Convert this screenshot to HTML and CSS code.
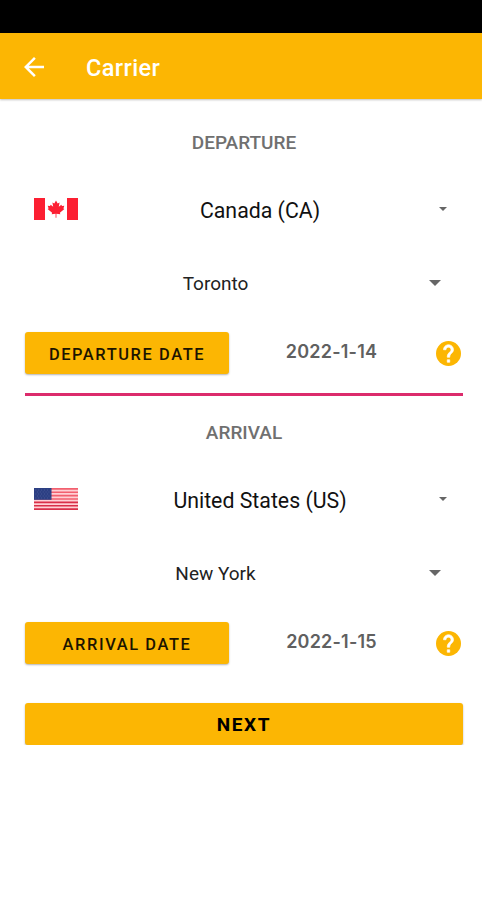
FILE: index.html
```html
<!DOCTYPE html>
<html lang="en">
<head>
<meta charset="utf-8">
<title>Carrier</title>
<link rel="stylesheet" href="styles.css">
</head>
<body>
<svg class="defs" width="0" height="0" aria-hidden="true">
  <symbol id="help" viewBox="2 2 20 20"><circle cx="12" cy="12" r="10"/><path fill="#fff" stroke="#fff" stroke-width=".5" d="M13 19h-2v-2h2v2zm2.070-7.750l-.9.920C13.450 12.900 13 13.500 13 15h-2v-.5c0-1.100.450-2.100 1.170-2.830l1.240-1.260c.370-.360.590-.860.590-1.410 0-1.100-.9-2-2-2s-2 .9-2 2H8c0-2.210 1.790-4 4-4s4 1.790 4 4c0 .880-.360 1.680-.930 2.250z"/></symbol>
</svg>
<div class="status"></div>
<header class="bar">
  <svg class="back" viewBox="4 4 16 16"><path d="M20 11H7.830l5.590-5.590L12 4l-8 8 8 8 1.410-1.410L7.830 13H20v-2z"/></svg>
  <h1>Carrier</h1>
</header>
<main>
  <section class="leg">
    <h2>DEPARTURE</h2>
    <div class="country">
      <svg class="flag" viewBox="0 0 44 22"><path fill="#fff" d="M0 0h44v22H0z"/><path fill="#fc1f32" d="M0 0h11v22H0zM33 0h11v22H33z"/><path fill="#fc1f32" d="M22 2.500l1.700 3 1.900-.9-.8 4.200 2.500-2 .7 1.300 2.300-.3-.9 2.600 1 .7-4.500 3.700.4 1.500-3.900-.5v4h-.8v-4l-3.900.5.400-1.500-4.500-3.700 1-.7-.9-2.600 2.300.3.700-1.300 2.500 2-.8-4.200 1.900.9z"/></svg>
      <span class="name">Canada (CA)</span><i class="caret small"></i>
    </div>
    <div class="city"><span>Toronto</span><i class="caret"></i></div>
    <div class="date">
      <button>DEPARTURE DATE</button><span>2022-1-14</span>
      <svg class="help"><use href="#help"/></svg>
    </div>
  </section>
  <hr>
  <section class="leg">
    <h2>ARRIVAL</h2>
    <div class="country">
      <svg class="flag" viewBox="0 0 44 22"><path fill="#ffd0d4" d="M0 0h44v22H0z"/><path stroke="#f2606f" stroke-width="1.700" d="M0 .85h44M0 4.230h44M0 7.610h44M0 11h44"/><path stroke="#d92f48" stroke-width="1.700" d="M0 14.380h44M0 17.760h44M0 21.150h44"/><path fill="#2c3f83" d="M0 0h17.500v11.800H0z"/><path stroke="#6474aa" stroke-width=".7" stroke-dasharray=".7 2.200" d="M1.500 2h15M3 4h13M1.500 6h15M3 8h13M1.500 10h15"/></svg>
      <span class="name">United States (US)</span><i class="caret small"></i>
    </div>
    <div class="city"><span>New York</span><i class="caret"></i></div>
    <div class="date">
      <button>ARRIVAL DATE</button><span>2022-1-15</span>
      <svg class="help"><use href="#help"/></svg>
    </div>
  </section>
  <button class="next">NEXT</button>
</main>
</body>
</html>
```
FILE: styles.css
```css
* { box-sizing: border-box; }
body { margin: 0; background: #fff; font-family: Roboto, sans-serif; color: #111; }
.defs { display: block; }
.status { height: 33px; background: #000; }
.bar {
  display: flex; align-items: center; gap: 42px; height: 66px; padding: 1px 24px 0;
  background: #fcb603; color: #fff; box-shadow: 0 1px 2px rgba(0,0,0,.25);
}
.back { width: 20px; height: 20px; fill: #fff; }
h1 { margin: 0; padding-top: 2px; font-size: 23.500px; letter-spacing: .4px; font-weight: 500; line-height: 30px; }
main { padding: 0 19px 0 25px; }
h2 {
  margin: 0; padding-top: 24px; font-size: 19px; font-weight: 500; line-height: 40px;
  text-align: center; color: #707070;
}
.country {
  display: grid; grid-template-columns: 44px 1fr 8px; align-items: center;
  height: 60px; margin-top: 16px; padding: 0 16px 0 9px;
}
.flag { width: 44px; height: 22px; }
.name { padding: 2px 0 0 3px; font-size: 21.300px; text-align: center; }
.city {
  display: grid; grid-template-columns: 381px 12px; align-items: center;
  height: 40px; margin-top: 24px; font-size: 19px; text-align: center; color: #222;
}
.caret { width: 12px; height: 6px; background: #666; clip-path: polygon(0 0, 100% 0, 50% 100%); }
.caret.small { width: 8px; height: 4px; }
.city .caret { margin-left: 23px; }
.date {
  display: grid; grid-template-columns: 204px 1fr 25px; align-items: center;
  height: 42px; margin-top: 29px; padding-right: 2px;
}
.date > span {
  padding: 0 2px 4px 0; text-align: center; font-family: Inter, sans-serif;
  font-size: 18px; font-weight: 600; letter-spacing: .2px; color: #606060;
}
button {
  height: 42px; padding: 2px 0 0; border: 0; border-radius: 3px; background: #fcb603; color: #1b1400;
  font: 500 16.400px Roboto, sans-serif; letter-spacing: 1.600px; box-shadow: 0 1px 2px rgba(0,0,0,.3);
}
.help { width: 25px; height: 25px; fill: #fcb603; }
hr { width: 438px; height: 2.500px; margin: 19px 0 0; border: 0; background: #dc2b6c; }
hr + .leg { margin-top: -6.500px; }
.next { display: block; width: 438px; margin-top: 39px; padding-top: 1px; font-size: 19px; font-weight: 700; color: #000; }
```
